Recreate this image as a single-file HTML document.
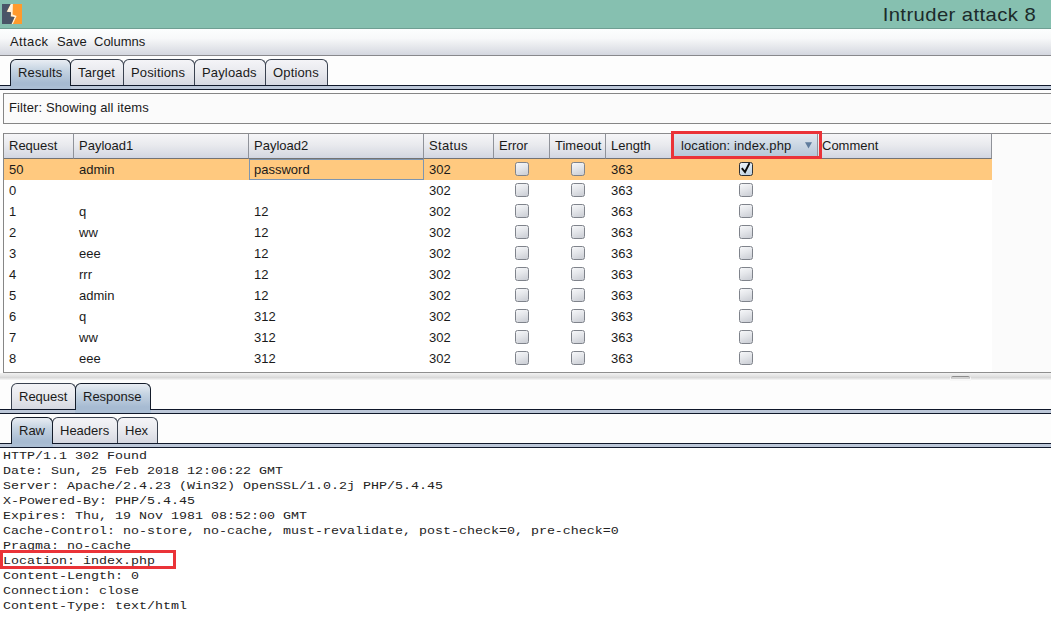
<!DOCTYPE html>
<html>
<head>
<meta charset="utf-8">
<title>Intruder attack 8</title>
<style>
*{box-sizing:border-box;margin:0;padding:0}
html,body{width:1051px;height:619px;overflow:hidden;background:#fdfdfd;font-family:"Liberation Sans",sans-serif;font-size:13px;color:#1a1a1a}
.abs{position:absolute}
#titlebar{left:0;top:0;width:1051px;height:29px;background:#86c0b0;border-bottom:1px solid #6f9f93}
#title{right:15px;top:5px;font-size:19px;line-height:22px;color:#1c2b2b;letter-spacing:0.4px;white-space:nowrap;transform:translateY(-0.6px) scaleX(1.065);transform-origin:100% 50%}
#menubar{left:0;top:29px;width:1051px;height:27px;background:linear-gradient(#fcfefe 0%,#f8f9fa 35%,#e6e8ec 68%,#d4d7e0 100%);border-bottom:1px solid #88888c}
#menubar span{position:absolute;top:5px;font-size:13px;white-space:nowrap}
.tab{position:absolute;height:26px;border:1px solid #3a4250;border-bottom:none;border-radius:6px 6px 0 0;background:linear-gradient(#f4f4f7 0%,#e8e9ee 50%,#d6d8e1 100%);font-size:13px;text-align:left;padding-left:7px;line-height:25px;white-space:nowrap;z-index:2}
.tab.sel{background:linear-gradient(#e8edf3 0%,#c6d4e2 38%,#a7bbd2 88%,#a7bbd2 100%);height:27px;border-color:#141c2a;z-index:3;box-shadow:0 3px 0 #abbed4}
.tabline{position:absolute;left:0;width:1051px;height:5px;background:#bcc7d8;border-top:1px solid #10182a;border-bottom:1px solid #10182a;z-index:1}
#filter{left:3px;top:93px;width:1052px;height:31px;border:1px solid #868686;background:#fbfbfb;font-size:13px;line-height:27px;padding-left:5px;letter-spacing:0.1px}
#tablewrap{left:3px;top:133px;width:1052px;height:240px;background:#fbfbfb;border-left:1px solid #868686;border-bottom:1px solid #8e8e8e}
#tbl{left:0;top:0;width:988px;height:239px;background:#fff}
.hc{position:absolute;top:0;height:26px;border-top:1px solid #8b8b8d;border-bottom:1px solid #747372;border-right:1px solid #8f9299;background:linear-gradient(#f6f6f8 0%,#e9eaee 45%,#d6d9e2 92%,#cfd5e4 100%);font-size:13px;line-height:23px;padding-left:5px;white-space:nowrap;overflow:hidden}
.row{position:absolute;left:0;width:988px;height:21px;font-size:13px;line-height:21px}
.row.sel{background:#ffc97f}
.row span{position:absolute;top:0;white-space:nowrap}
.cb{position:absolute;top:3px;width:14px;height:14px;border:1px solid #7f838b;border-radius:2.5px;background:linear-gradient(160deg,#f6f7f9 0%,#e4e6ea 45%,#c9ccd3 100%)}
.cb.chk{border-color:#2c3036;background:linear-gradient(160deg,#eef4f9 0%,#d6e3ee 50%,#bdd0e2 100%)}
pre{font-family:"Liberation Mono",monospace;font-size:13.33px;line-height:16.9492px;color:#222;transform:scaleY(0.885);transform-origin:0 0}
</style>
</head>
<body>
<div id="titlebar" class="abs">
<svg class="abs" style="left:2px;top:4px" width="20" height="20" viewBox="0 0 20 20"><rect width="20" height="20" fill="#ff9a2c"/><path d="M8.6 0H10.9L10.6 10.4L14.6 12.1L10.9 20H9.5L12.6 13L8.7 12.4L9 8.3L4.6 7.8Z" fill="#fff3dc"/><path d="M0 0H8.6L4.6 7.8L9 8.3L8.7 12.4L12.6 13L9.5 20H0Z" fill="#4a5568"/></svg>
<div id="title" class="abs">Intruder attack 8</div>
</div>
<div id="menubar" class="abs"><span style="left:10px;letter-spacing:0.4px">Attack</span><span style="left:57px">Save</span><span style="left:94px">Columns</span></div>

<div class="tab sel" style="left:10px;top:59px;width:61px;letter-spacing:0.15px">Results</div>
<div class="tab" style="left:70px;top:59px;width:54px;letter-spacing:0.15px">Target</div>
<div class="tab" style="left:123px;top:59px;width:72px;letter-spacing:0.15px">Positions</div>
<div class="tab" style="left:194px;top:59px;width:72px;letter-spacing:0.15px">Payloads</div>
<div class="tab" style="left:265px;top:59px;width:63px;letter-spacing:0.15px">Options</div>
<div class="tabline" style="top:85px"></div>

<div id="filter" class="abs">Filter: Showing all items</div>

<div class="abs" style="left:992px;top:133px;width:59px;height:1px;background:#8b8b8d;z-index:4"></div>
<div id="tablewrap" class="abs">
<div id="tbl" class="abs">
<div class="hc" style="left:0;width:70px">Request</div>
<div class="hc" style="left:70px;width:175px">Payload1</div>
<div class="hc" style="left:245px;width:175px">Payload2</div>
<div class="hc" style="left:420px;width:70px;letter-spacing:0.35px">Status</div>
<div class="hc" style="left:490px;width:56px">Error</div>
<div class="hc" style="left:546px;width:56px">Timeout</div>
<div class="hc" style="left:602px;width:66px">Length</div>
<div class="hc" style="left:668px;width:146px;padding-left:9px;letter-spacing:0.1px;background:linear-gradient(#e1e8ef 0%,#c9d5e2 50%,#b3c4d6 100%)">location: index.php<svg style="position:absolute;left:133px;top:8px" width="7" height="7" viewBox="0 0 7 7"><path d="M0 0.3H7L3.5 6.6Z" fill="#5f7c9d"/></svg></div>
<div class="abs" style="left:667px;top:-2px;width:151px;height:28px;border:3px solid #ea3338;z-index:5"></div>
<div class="hc" style="left:814px;width:174px;padding-left:4px">Comment</div>
<div class="row sel" style="top:26px"><span style="left:5px">50</span><span style="left:75px">admin</span><b class="abs" style="left:245px;top:0;width:175px;height:21px;border:1px solid #7d95b0"></b><span style="left:250px">password</span><span style="left:425px">302</span><i class="cb" style="left:511px"></i><i class="cb" style="left:567px"></i><span style="left:607px">363</span><i class="cb chk" style="left:735px"><svg style="position:absolute;left:0;top:0;overflow:visible" width="12" height="12" viewBox="0 0 12 12"><path d="M1.8 5.2L5 9L9.5 0.1" fill="none" stroke="#0a0a0a" stroke-width="1.9"/></svg></i></div>
<div class="row" style="top:47px"><span style="left:5px">0</span><span style="left:75px"></span><span style="left:250px"></span><span style="left:425px">302</span><i class="cb" style="left:511px"></i><i class="cb" style="left:567px"></i><span style="left:607px">363</span><i class="cb" style="left:735px"></i></div>
<div class="row" style="top:68px"><span style="left:5px">1</span><span style="left:75px">q</span><span style="left:250px">12</span><span style="left:425px">302</span><i class="cb" style="left:511px"></i><i class="cb" style="left:567px"></i><span style="left:607px">363</span><i class="cb" style="left:735px"></i></div>
<div class="row" style="top:89px"><span style="left:5px">2</span><span style="left:75px">ww</span><span style="left:250px">12</span><span style="left:425px">302</span><i class="cb" style="left:511px"></i><i class="cb" style="left:567px"></i><span style="left:607px">363</span><i class="cb" style="left:735px"></i></div>
<div class="row" style="top:110px"><span style="left:5px">3</span><span style="left:75px">eee</span><span style="left:250px">12</span><span style="left:425px">302</span><i class="cb" style="left:511px"></i><i class="cb" style="left:567px"></i><span style="left:607px">363</span><i class="cb" style="left:735px"></i></div>
<div class="row" style="top:131px"><span style="left:5px">4</span><span style="left:75px">rrr</span><span style="left:250px">12</span><span style="left:425px">302</span><i class="cb" style="left:511px"></i><i class="cb" style="left:567px"></i><span style="left:607px">363</span><i class="cb" style="left:735px"></i></div>
<div class="row" style="top:152px"><span style="left:5px">5</span><span style="left:75px">admin</span><span style="left:250px">12</span><span style="left:425px">302</span><i class="cb" style="left:511px"></i><i class="cb" style="left:567px"></i><span style="left:607px">363</span><i class="cb" style="left:735px"></i></div>
<div class="row" style="top:173px"><span style="left:5px">6</span><span style="left:75px">q</span><span style="left:250px">312</span><span style="left:425px">302</span><i class="cb" style="left:511px"></i><i class="cb" style="left:567px"></i><span style="left:607px">363</span><i class="cb" style="left:735px"></i></div>
<div class="row" style="top:194px"><span style="left:5px">7</span><span style="left:75px">ww</span><span style="left:250px">312</span><span style="left:425px">302</span><i class="cb" style="left:511px"></i><i class="cb" style="left:567px"></i><span style="left:607px">363</span><i class="cb" style="left:735px"></i></div>
<div class="row" style="top:215px"><span style="left:5px">8</span><span style="left:75px">eee</span><span style="left:250px">312</span><span style="left:425px">302</span><i class="cb" style="left:511px"></i><i class="cb" style="left:567px"></i><span style="left:607px">363</span><i class="cb" style="left:735px"></i></div>
</div>
</div>


<div class="abs" style="left:0;top:373px;width:1051px;height:7px;background:linear-gradient(#f2f2f2 0%,#e4e4e4 40%,#d9d9d9 65%,#f6f6f6 100%)"></div>
<div class="abs" style="left:951px;top:376px;width:19px;height:3px;background:#d2d2d2;border-top:1px solid #8c8c8c;border-radius:2px 2px 0 0;box-shadow:0 1px 0 1px #f8f8f8"></div>
<div class="tab" style="left:11px;top:383px;width:65px">Request</div>
<div class="tab sel" style="left:75px;top:383px;width:76px">Response</div>
<div class="tabline" style="top:409px"></div>
<div class="tab sel" style="left:11px;top:417px;width:42px">Raw</div>
<div class="tab" style="left:52px;top:417px;width:66px">Headers</div>
<div class="tab" style="left:117px;top:417px;width:41px">Hex</div>
<div class="tabline" style="top:443px"></div>
<div class="abs" style="left:0;top:448px;width:1051px;height:171px;background:#fff"></div>
<div class="abs" style="left:0;top:550px;width:176px;height:19px;border:3px solid #ea3338;z-index:5"></div>
<pre class="abs" style="left:3px;top:449px">HTTP/1.1 302 Found
Date: Sun, 25 Feb 2018 12:06:22 GMT
Server: Apache/2.4.23 (Win32) OpenSSL/1.0.2j PHP/5.4.45
X-Powered-By: PHP/5.4.45
Expires: Thu, 19 Nov 1981 08:52:00 GMT
Cache-Control: no-store, no-cache, must-revalidate, post-check=0, pre-check=0
Pragma: no-cache
Location: index.php
Content-Length: 0
Connection: close
Content-Type: text/html</pre>
</body>
</html>
